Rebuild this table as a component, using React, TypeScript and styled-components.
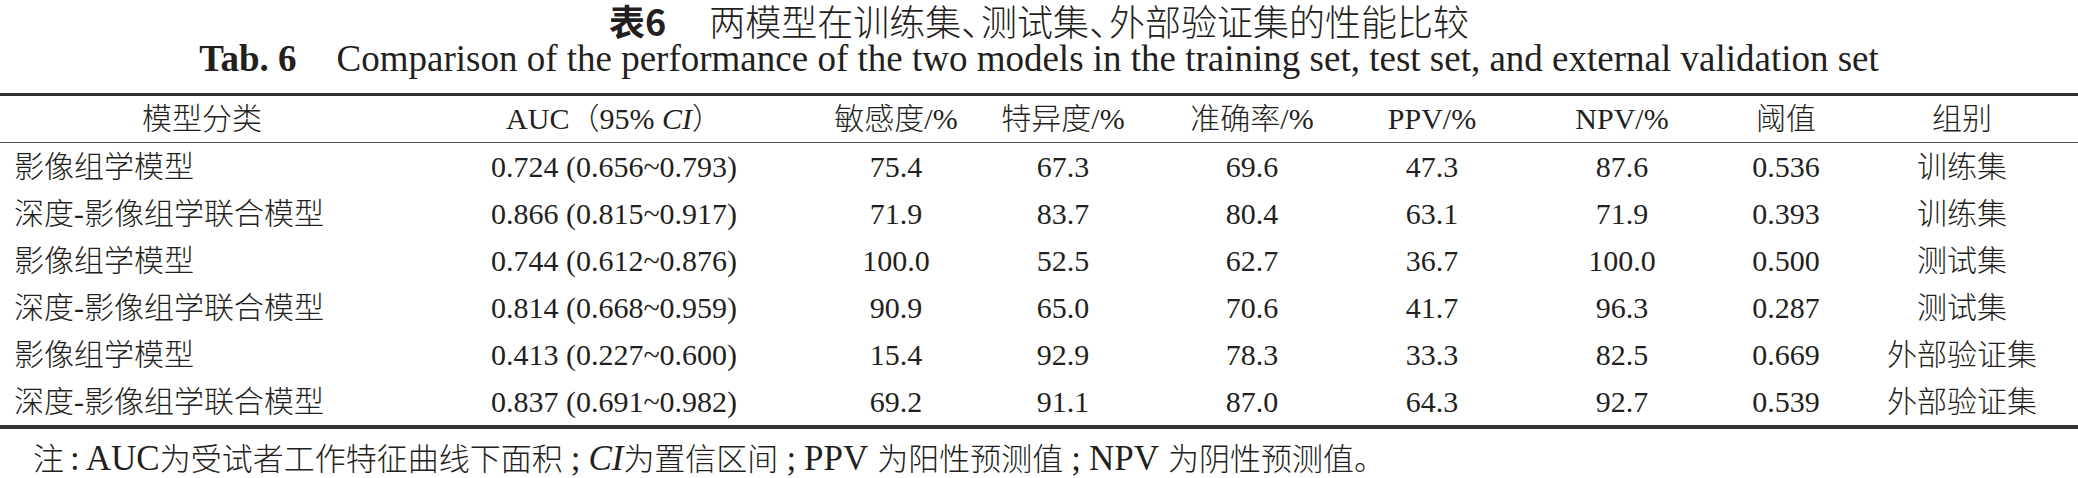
import React from 'react';
import styled, { createGlobalStyle } from 'styled-components';

const GlobalStyle = createGlobalStyle`
  html, body {
    margin: 0;
    padding: 0;
    background: #fff;
  }
  body {
    font-family: "Liberation Serif", "Noto Sans CJK SC", serif;
    font-weight: 300;
    color: #231f20;
  }
`;

const Page = styled.div`
  width: 2078px;
  height: 478px;
  overflow: hidden;
`;

const Caption = styled.div`
  display: flex;
  justify-content: center;
  align-items: baseline;
  font-size: 36px;
  line-height: 40px;
  height: 40px;
  white-space: nowrap;
`;

const CaptionLabel = styled.span`
  font-family: "Noto Sans CJK SC", sans-serif;
  font-weight: 700;
  margin-right: 43px;
`;

// the enumeration comma is set half-width in the original
const Dun = styled.span`
  letter-spacing: -0.45em;
`;

const SubCaption = styled.div`
  text-align: center;
  font-size: 37px;
  line-height: 38px;
  height: 38px;
  margin-bottom: 15px;
  white-space: nowrap;
`;

const SubLabel = styled.span`
  font-weight: 700;
  margin-right: 40px;
`;

const Table = styled.table`
  width: 2078px;
  border-collapse: collapse;
  table-layout: fixed;
  border-top: 3px solid #333;
  border-bottom: 4px solid #333;
  font-size: 30px;
`;

const HeadCell = styled.th`
  height: 46px;
  padding: 0;
  font-weight: 300;
  text-align: center;
  vertical-align: middle;
  line-height: 1;
  border-bottom: 1.5px solid #555;
  white-space: nowrap;
`;

const Cell = styled.td<{ $left?: boolean }>`
  height: 47px;
  padding: 0 0 0 ${(p) => (p.$left ? '14px' : '0')};
  text-align: ${(p) => (p.$left ? 'left' : 'center')};
  vertical-align: middle;
  line-height: 1;
  white-space: nowrap;
`;

const Em = styled.i`
  font-style: italic;
`;

const Note = styled.div`
  display: flex;
  align-items: baseline;
  margin-top: 13px;
  padding-left: 33px;
  font-size: 35px;
  line-height: 34px;
  height: 34px;
  white-space: nowrap;
`;

// Chinese runs of the note are set smaller than its Latin text
const Han = styled.span<{ $lead?: boolean }>`
  font-size: 31px;
  margin-left: ${(p) => (p.$lead ? '9px' : '0')};
`;

const Punct = styled.span<{ $wide?: boolean }>`
  margin: 0 ${(p) => (p.$wide ? '8px' : '6px')};
`;

const widths = [404, 420, 144, 190, 188, 172, 208, 120, 232];

const rows = [
  ['影像组学模型', '0.724 (0.656~0.793)', '75.4', '67.3', '69.6', '47.3', '87.6', '0.536', '训练集'],
  ['深度-影像组学联合模型', '0.866 (0.815~0.917)', '71.9', '83.7', '80.4', '63.1', '71.9', '0.393', '训练集'],
  ['影像组学模型', '0.744 (0.612~0.876)', '100.0', '52.5', '62.7', '36.7', '100.0', '0.500', '测试集'],
  ['深度-影像组学联合模型', '0.814 (0.668~0.959)', '90.9', '65.0', '70.6', '41.7', '96.3', '0.287', '测试集'],
  ['影像组学模型', '0.413 (0.227~0.600)', '15.4', '92.9', '78.3', '33.3', '82.5', '0.669', '外部验证集'],
  ['深度-影像组学联合模型', '0.837 (0.691~0.982)', '69.2', '91.1', '87.0', '64.3', '92.7', '0.539', '外部验证集'],
];

export default function App() {
  return (
    <Page>
      <GlobalStyle />
      <Caption>
        <CaptionLabel>表6</CaptionLabel>
        <span>
          两模型在训练集<Dun>、</Dun>测试集<Dun>、</Dun>外部验证集的性能比较
        </span>
      </Caption>
      <SubCaption>
        <SubLabel>Tab. 6</SubLabel>Comparison of the performance of the two models in the training set, test set, and external validation set
      </SubCaption>
      <Table>
        <colgroup>
          {widths.map((w, i) => (
            <col key={i} style={{ width: w }} />
          ))}
        </colgroup>
        <thead>
          <tr>
            <HeadCell>模型分类</HeadCell>
            <HeadCell>
              AUC（95% <Em>CI</Em>）
            </HeadCell>
            <HeadCell>敏感度/%</HeadCell>
            <HeadCell>特异度/%</HeadCell>
            <HeadCell>准确率/%</HeadCell>
            <HeadCell>PPV/%</HeadCell>
            <HeadCell>NPV/%</HeadCell>
            <HeadCell>阈值</HeadCell>
            <HeadCell>组别</HeadCell>
          </tr>
        </thead>
        <tbody>
          {rows.map((r, i) => (
            <tr key={i}>
              {r.map((v, j) => (
                <Cell key={j} $left={j === 0}>
                  {v}
                </Cell>
              ))}
            </tr>
          ))}
        </tbody>
      </Table>
      <Note>
        <Han>注</Han>
        <Punct>:</Punct>
        <span>AUC</span>
        <Han>为受试者工作特征曲线下面积</Han>
        <Punct $wide>;</Punct>
        <Em>CI</Em>
        <Han>为置信区间</Han>
        <Punct $wide>;</Punct>
        <span>PPV</span>
        <Han $lead>为阳性预测值</Han>
        <Punct $wide>;</Punct>
        <span>NPV</span>
        <Han $lead>为阴性预测值。</Han>
      </Note>
    </Page>
  );
}
